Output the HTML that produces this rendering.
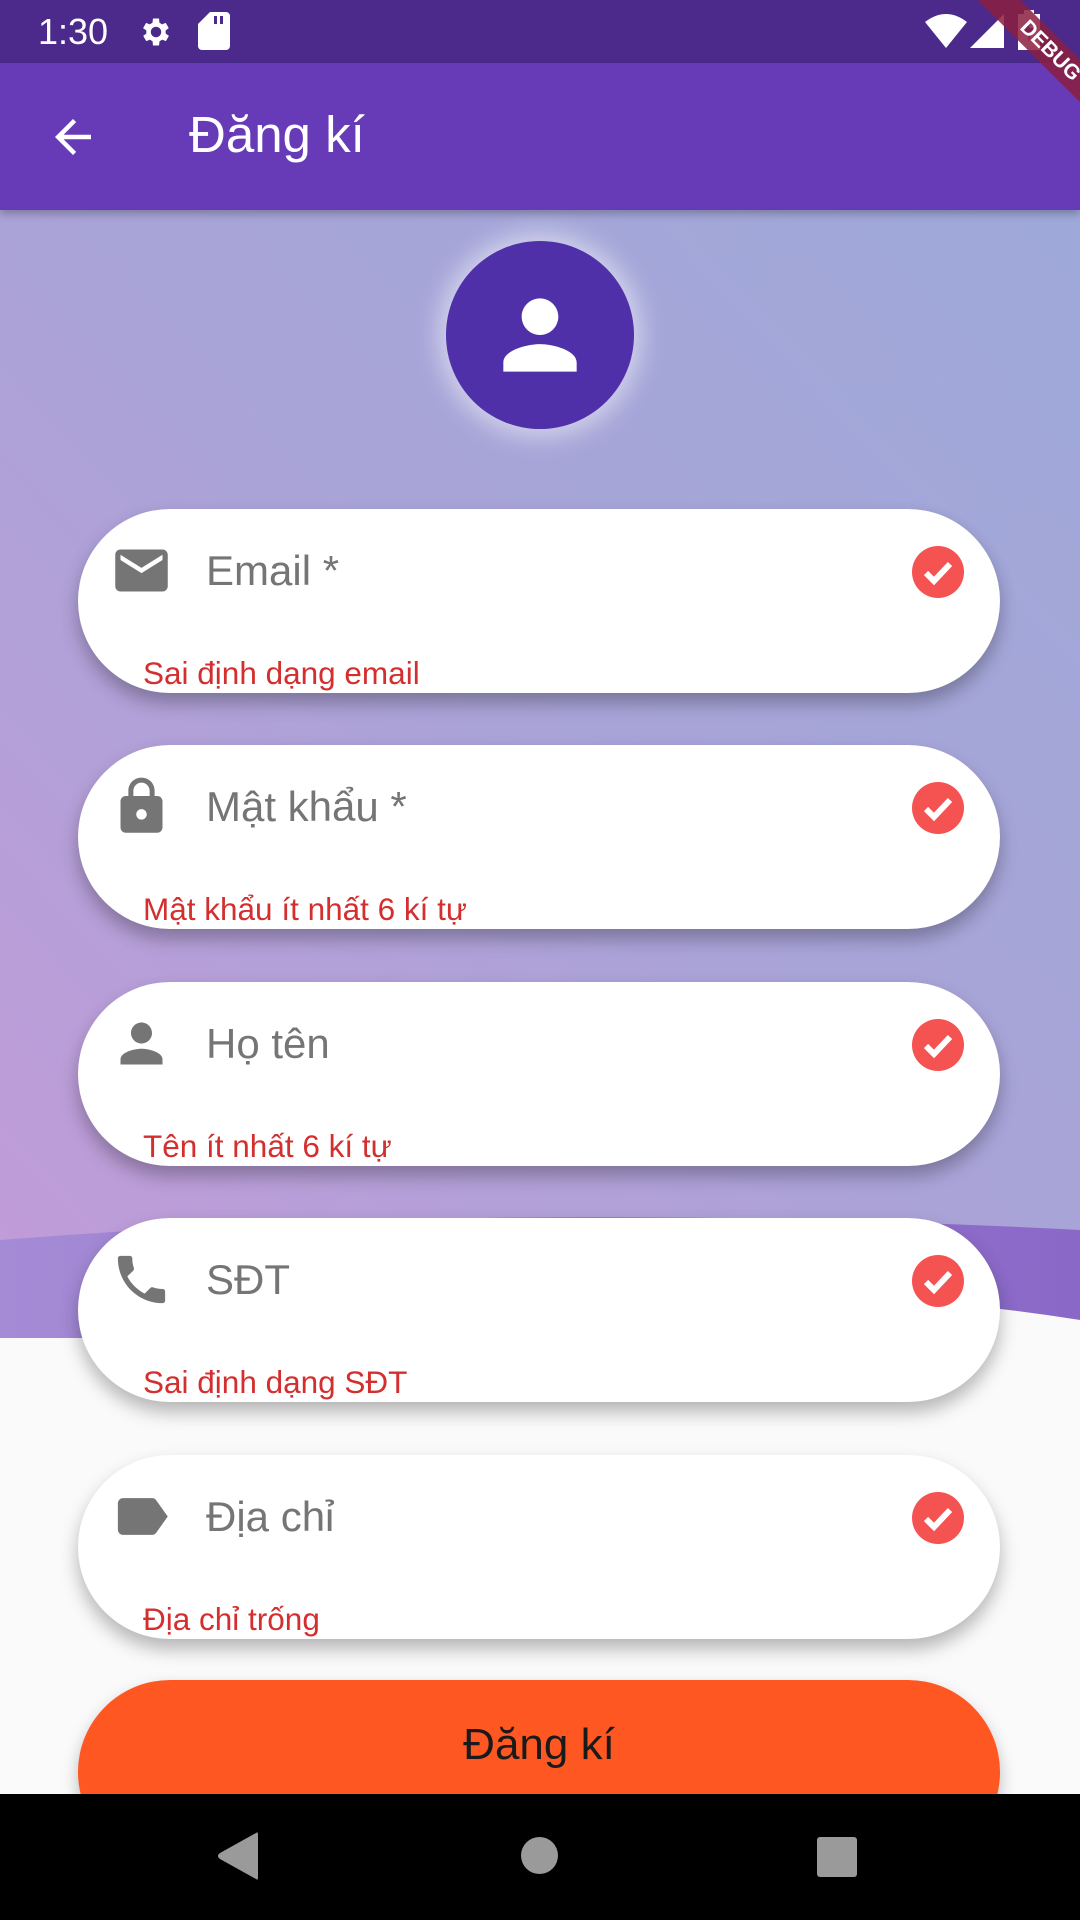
<!DOCTYPE html>
<html><head><meta charset="utf-8">
<style>
*{margin:0;padding:0;box-sizing:border-box}
body{width:1080px;height:1920px;overflow:hidden;position:relative;font-family:"Liberation Sans","DejaVu Sans",sans-serif;background:#fafafa}
.abs{position:absolute}
.field{position:absolute;left:78px;width:922px;height:184px;background:#fff;border-radius:92px;box-shadow:0 10px 18px rgba(0,0,0,.28)}
.field .ic{position:absolute;left:32px;top:30px;width:63px;height:63px}
.field .lb{position:absolute;left:128px;top:38px;font-size:42px;color:#757575;line-height:48px;white-space:nowrap}
.field .er{position:absolute;left:65px;top:146px;font-size:31.5px;color:#d32f2f;line-height:36px;white-space:nowrap}
.field .ck{position:absolute;right:36px;top:37px;width:52px;height:52px}
</style></head><body>
<svg class="abs" style="left:0;top:210px" width="1080" height="1140" viewBox="0 0 1080 1140">
<defs>
<linearGradient id="g" x1="1" y1="0" x2="0" y2="1">
<stop offset="0" stop-color="#9ea9d9"/><stop offset="0.5" stop-color="#aaa3d8"/><stop offset="1" stop-color="#c29bd8"/>
</linearGradient>
<linearGradient id="g2" x1="0" y1="0" x2="1" y2="0">
<stop offset="0" stop-color="#a58bd6"/><stop offset="1" stop-color="#8a68c8"/>
</linearGradient>
</defs>
<rect width="1080" height="1140" fill="url(#g)"/>
<path d="M0 1030 Q500 990 1080 1020 L1080 1110 Q700 1050 300 1128 L0 1128Z" fill="url(#g2)"/>
<path d="M0 1128 L300 1128 Q700 1050 1080 1110 L1080 1140 L0 1140Z" fill="#fafafa"/>
</svg>
<div class="abs" style="left:0;top:0;width:1080px;height:63px;background:#4b2a8c"></div>
<div class="abs" style="left:38px;top:10px;font-size:36px;color:#fff;line-height:44px">1:30</div>
<svg class="abs" style="left:138px;top:14px" width="36" height="36" viewBox="0 0 24 24"><path fill="#fff" d="M19.4 13a7.5 7.5 0 0 0 0-2l2.1-1.6-2-3.5-2.5 1a7 7 0 0 0-1.7-1L15 3h-4l-.4 2.9a7 7 0 0 0-1.7 1l-2.5-1-2 3.5L6.6 11a7.5 7.5 0 0 0 0 2l-2.1 1.6 2 3.5 2.5-1a7 7 0 0 0 1.7 1L11 21h4l.4-2.9a7 7 0 0 0 1.7-1l2.5 1 2-3.5zM13 15.5a3.5 3.5 0 1 1 0-7 3.5 3.5 0 0 1 0 7z" transform="translate(-1 0)"/></svg>
<svg class="abs" style="left:198px;top:12px" width="32" height="38" viewBox="0 0 16 19"><path fill="#fff" d="M6 0h8a2 2 0 0 1 2 2v15a2 2 0 0 1-2 2H2a2 2 0 0 1-2-2V6zM8 2v4h1.5V2zM11 2v4h1.5V2z"/></svg>
<svg class="abs" style="left:925px;top:14px" width="42" height="34" viewBox="0 0 42 34"><path fill="#fff" d="M0 8Q21-8 42 8L21 34Z"/></svg>
<svg class="abs" style="left:970px;top:14px" width="34" height="34" viewBox="0 0 34 34"><path fill="#fff" d="M34 0V34H0Z"/></svg>
<svg class="abs" style="left:1018px;top:10px" width="22" height="40" viewBox="0 0 22 40"><path fill="#fff" d="M6 0h10v4h6v36H0V4h6z"/><path fill="#4b2a8c" d="M12 10L6 23h5l-1 9 6-14h-5z"/></svg>
<div class="abs" style="left:0;top:63px;width:1080px;height:147px;background:#673ab7;box-shadow:0 4px 8px rgba(0,0,0,.25)"></div>
<svg class="abs" style="left:46px;top:110px" width="54" height="54" viewBox="0 0 24 24"><path fill="#fff" d="M20 11H7.8l5.6-5.6L12 4l-8 8 8 8 1.4-1.4L7.8 13H20z"/></svg>
<div class="abs" style="left:189px;top:104px;font-size:51px;color:#fff;line-height:62px">Đăng kí</div>
<div class="abs" style="left:955px;top:36px;width:190px;height:30px;background:rgba(139,30,63,.85);transform:rotate(45deg);color:#fff;font-weight:bold;font-size:21px;text-align:center;line-height:30px">DEBUG</div>
<div class="abs" style="left:446px;top:241px;width:188px;height:188px;border-radius:50%;background:#5030a8;box-shadow:0 0 24px 8px rgba(255,255,255,.5)"></div>
<svg class="abs" style="left:485px;top:280px" width="110" height="110" viewBox="0 0 24 24"><path fill="#fff" d="M12 12c2.2 0 4-1.8 4-4s-1.8-4-4-4-4 1.8-4 4 1.8 4 4 4zm0 2c-2.7 0-8 1.3-8 4v2h16v-2c0-2.7-5.3-4-8-4z"/></svg>

<div class="field" style="top:509px">
<svg class="ic" viewBox="0 0 24 24"><path fill="#757575" d="M20 4H4c-1.1 0-2 .9-2 2v12c0 1.1.9 2 2 2h16c1.1 0 2-.9 2-2V6c0-1.1-.9-2-2-2zm0 4l-8 5-8-5V6l8 5 8-5v2z"/></svg>
<div class="lb">Email *</div><div class="er">Sai định dạng email</div>
<svg class="ck" viewBox="0 0 52 52"><circle cx="26" cy="26" r="26" fill="#f55252"/><path d="M14 27l8 8 16-17" stroke="#fff" stroke-width="6" fill="none"/></svg>
</div>
<div class="field" style="top:745px">
<svg class="ic" viewBox="0 0 24 24"><path fill="#757575" d="M18 8h-1V6c0-2.8-2.2-5-5-5S7 3.2 7 6v2H6c-1.1 0-2 .9-2 2v10c0 1.1.9 2 2 2h12c1.1 0 2-.9 2-2V10c0-1.1-.9-2-2-2zm-6 9c-1.1 0-2-.9-2-2s.9-2 2-2 2 .9 2 2-.9 2-2 2zm3.1-9H8.9V6c0-1.7 1.4-3.1 3.1-3.1s3.1 1.4 3.1 3.1v2z"/></svg>
<div class="lb">Mật khẩu *</div><div class="er">Mật khẩu ít nhất 6 kí tự</div>
<svg class="ck" viewBox="0 0 52 52"><circle cx="26" cy="26" r="26" fill="#f55252"/><path d="M14 27l8 8 16-17" stroke="#fff" stroke-width="6" fill="none"/></svg>
</div>
<div class="field" style="top:982px">
<svg class="ic" viewBox="0 0 24 24"><path fill="#757575" d="M12 12c2.2 0 4-1.8 4-4s-1.8-4-4-4-4 1.8-4 4 1.8 4 4 4zm0 2c-2.7 0-8 1.3-8 4v2h16v-2c0-2.7-5.3-4-8-4z"/></svg>
<div class="lb">Họ tên</div><div class="er">Tên ít nhất 6 kí tự</div>
<svg class="ck" viewBox="0 0 52 52"><circle cx="26" cy="26" r="26" fill="#f55252"/><path d="M14 27l8 8 16-17" stroke="#fff" stroke-width="6" fill="none"/></svg>
</div>
<div class="field" style="top:1218px">
<svg class="ic" viewBox="0 0 24 24"><path fill="#757575" d="M6.6 10.8c1.4 2.8 3.8 5.1 6.6 6.6l2.2-2.2c.3-.3.7-.4 1-.2 1.1.4 2.3.6 3.6.6.6 0 1 .4 1 1V20c0 .6-.4 1-1 1-9.4 0-17-7.6-17-17 0-.6.4-1 1-1h3.5c.6 0 1 .4 1 1 0 1.3.2 2.5.6 3.6.1.3 0 .7-.2 1z"/></svg>
<div class="lb">SĐT</div><div class="er">Sai định dạng SĐT</div>
<svg class="ck" viewBox="0 0 52 52"><circle cx="26" cy="26" r="26" fill="#f55252"/><path d="M14 27l8 8 16-17" stroke="#fff" stroke-width="6" fill="none"/></svg>
</div>
<div class="field" style="top:1455px">
<svg class="ic" viewBox="0 0 24 24"><path fill="#757575" d="M17.6 5.8C17.3 5.3 16.7 5 16 5L5 5C3.9 5 3 5.9 3 7v10c0 1.1.9 2 2 2h11c.7 0 1.3-.3 1.6-.8L22 12z"/></svg>
<div class="lb">Địa chỉ</div><div class="er">Địa chỉ trống</div>
<svg class="ck" viewBox="0 0 52 52"><circle cx="26" cy="26" r="26" fill="#f55252"/><path d="M14 27l8 8 16-17" stroke="#fff" stroke-width="6" fill="none"/></svg>
</div>
<div class="abs" style="left:78px;top:1680px;width:922px;height:184px;border-radius:92px;background:#ff5722;box-shadow:0 8px 16px rgba(0,0,0,.25)"></div>
<div class="abs" style="left:78px;top:1716px;width:922px;text-align:center;font-size:44px;color:#1a1a1a;line-height:58px">Đăng kí</div>
<div class="abs" style="left:0;top:1794px;width:1080px;height:126px;background:#000"></div>
<svg class="abs" style="left:216px;top:1831px" width="44" height="50" viewBox="0 0 44 50"><path fill="#9a9a9a" d="M40 2Q42 0 42 4V46Q42 50 40 48L4 28Q0 25 4 22Z"/></svg>
<div class="abs" style="left:521px;top:1837px;width:37px;height:37px;border-radius:50%;background:#9a9a9a"></div>
<div class="abs" style="left:817px;top:1837px;width:40px;height:40px;border-radius:3px;background:#9a9a9a"></div>
</body></html>
